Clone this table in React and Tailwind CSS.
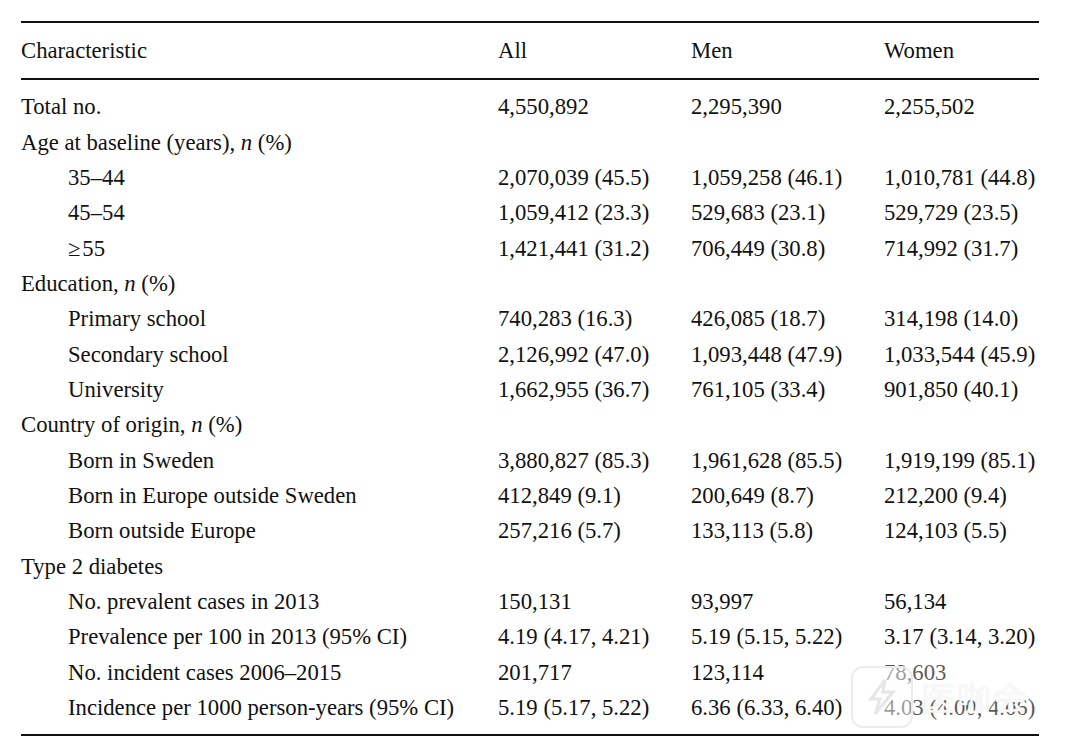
import React from "react";

const rows = [
  { label: "Total no.", v: ["4,550,892", "2,295,390", "2,255,502"] },
  { label: <>Age at baseline (years), <i>n</i> (%)</> },
  { label: "35–44", indent: true, v: ["2,070,039 (45.5)", "1,059,258 (46.1)", "1,010,781 (44.8)"] },
  { label: "45–54", indent: true, v: ["1,059,412 (23.3)", "529,683 (23.1)", "529,729 (23.5)"] },
  { label: "≥\u200a55", indent: true, v: ["1,421,441 (31.2)", "706,449 (30.8)", "714,992 (31.7)"] },
  { label: <>Education, <i>n</i> (%)</> },
  { label: "Primary school", indent: true, v: ["740,283 (16.3)", "426,085 (18.7)", "314,198 (14.0)"] },
  { label: "Secondary school", indent: true, v: ["2,126,992 (47.0)", "1,093,448 (47.9)", "1,033,544 (45.9)"] },
  { label: "University", indent: true, v: ["1,662,955 (36.7)", "761,105 (33.4)", "901,850 (40.1)"] },
  { label: <>Country of origin, <i>n</i> (%)</> },
  { label: "Born in Sweden", indent: true, v: ["3,880,827 (85.3)", "1,961,628 (85.5)", "1,919,199 (85.1)"] },
  { label: "Born in Europe outside Sweden", indent: true, v: ["412,849 (9.1)", "200,649 (8.7)", "212,200 (9.4)"] },
  { label: "Born outside Europe", indent: true, v: ["257,216 (5.7)", "133,113 (5.8)", "124,103 (5.5)"] },
  { label: "Type 2 diabetes" },
  { label: "No. prevalent cases in 2013", indent: true, v: ["150,131", "93,997", "56,134"] },
  { label: "Prevalence per 100 in 2013 (95% CI)", indent: true, v: ["4.19 (4.17, 4.21)", "5.19 (5.15, 5.22)", "3.17 (3.14, 3.20)"] },
  { label: "No. incident cases 2006–2015", indent: true, v: ["201,717", "123,114", "78,603"] },
  { label: "Incidence per 1000 person-years (95% CI)", indent: true, v: ["5.19 (5.17, 5.22)", "6.36 (6.33, 6.40)", "4.03 (4.00, 4.06)"] },
];

const cols = "grid grid-cols-[477px_193px_193px_155px]";

export default function App() {
  return (
    <div
      className="relative w-[1080px] h-[756px] bg-white text-[#111] text-[22.7px] overflow-hidden"
      style={{ fontFamily: '"Liberation Serif", "Times New Roman", serif' }}
    >
      <div className="pt-[21px] pl-[21px]">
        <div className="w-[1018px]">
          <div className="h-[2px] bg-[#111]" />
          <div className={`${cols} h-[55px] items-center leading-none pt-[2px]`}>
            <div>Characteristic</div>
            <div>All</div>
            <div>Men</div>
            <div>Women</div>
          </div>
          <div className="h-[2px] bg-[#111]" />
          <div className="py-[9px]">
            {rows.map((r, i) => (
              <div key={i} className={`${cols} h-[35.35px] items-center leading-[35px] whitespace-nowrap`}>
                <div className={r.indent ? "pl-[47px]" : ""}>{r.label}</div>
                <div>{r.v ? r.v[0] : ""}</div>
                <div>{r.v ? r.v[1] : ""}</div>
                <div>{r.v ? r.v[2] : ""}</div>
              </div>
            ))}
          </div>
          <div className="h-[2px] bg-[#111]" />
        </div>
      </div>

      <div className="absolute left-[851px] top-[664px] w-[195px] h-[66px] flex items-center gap-[8px] rounded-[12px] bg-white/30">
        <div className="w-[62px] h-[62px] shrink-0 rounded-[12px] border-[2px] border-[#ececec] bg-white/40 flex items-center justify-center">
          <svg width="34" height="40" viewBox="0 0 34 40" fill="none" stroke="#e6e6e6" strokeWidth="3">
            <path d="M20 3 L6 22 L15 22 L10 37 L28 15 L18 15 Z" />
          </svg>
        </div>
        <div
          className="whitespace-nowrap text-[34px] leading-none text-white/80 tracking-[2px]"
          style={{ fontFamily: '"Noto Sans CJK SC", sans-serif', textShadow: "0 0 1px #dcdcdc" }}
        >
          医咖会
        </div>
      </div>
    </div>
  );
}
